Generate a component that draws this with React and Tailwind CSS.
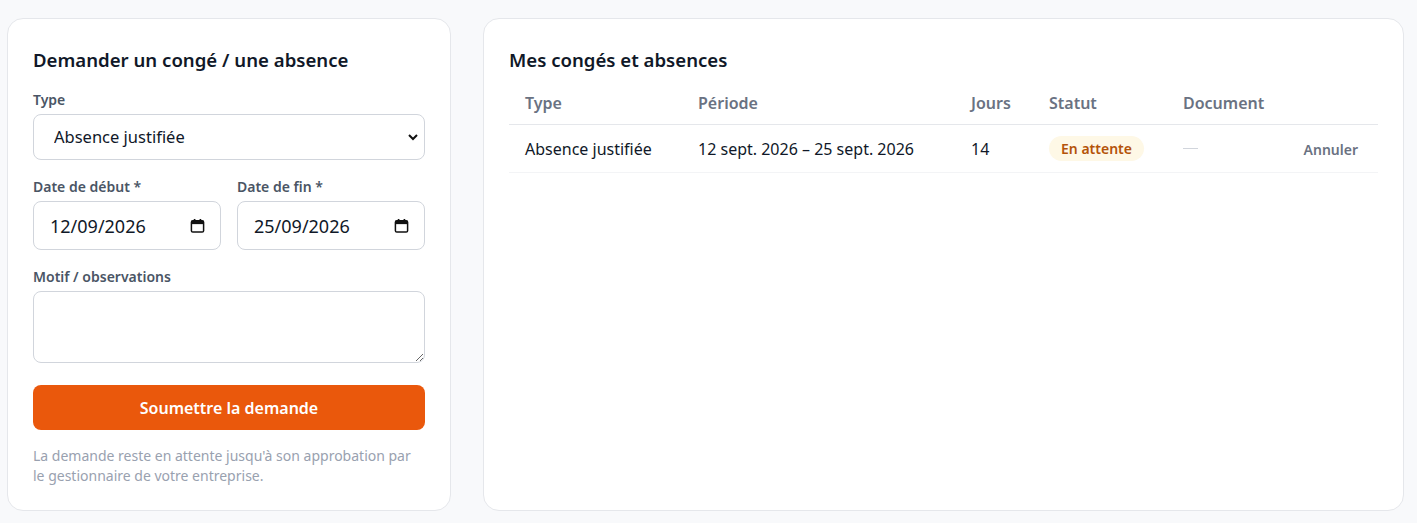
import { useState } from "react";

const font = { fontFamily: '"Noto Sans", "Open Sans", sans-serif' };

function CalendarIcon() {
  return (
    <svg width="15" height="15" viewBox="0 0 16 16" className="pointer-events-none absolute right-4 top-1/2 -translate-y-1/2">
      <rect x="1.5" y="2.5" width="13" height="12" rx="1.5" fill="none" stroke="#111" strokeWidth="1.6" />
      <rect x="1.5" y="2.5" width="13" height="3.5" fill="#111" />
      <rect x="4" y="0.5" width="1.8" height="3" fill="#111" />
      <rect x="10.2" y="0.5" width="1.8" height="3" fill="#111" />
    </svg>
  );
}

function DateField({ label, value }) {
  return (
    <div className="flex flex-col gap-1">
      <label className="text-sm font-semibold text-gray-600">{label}</label>
      <div className="relative">
        <input
          type="text"
          defaultValue={value}
          className="h-[49px] w-full rounded-lg border border-gray-300 bg-white pl-4 pr-10 text-[18px] text-gray-900 outline-none"
        />
        <CalendarIcon />
      </div>
    </div>
  );
}

export default function App() {
  const [type, setType] = useState("justifiee");

  return (
    <div className="min-h-screen bg-[#f8f9fb] pl-[7px] pr-[13px] pt-[18px]" style={font}>
      <div className="flex gap-8 items-stretch">
        {/* formulaire de demande */}
        <section className="w-[444px] shrink-0 rounded-2xl border border-gray-200 bg-white px-[25px] pt-[29px] pb-[24px]">
          <h2 className="text-[18.6px] font-semibold text-gray-900 leading-6">Demander un congé / une absence</h2>

          <div className="mt-[18px] flex flex-col gap-1">
            <label className="text-sm font-semibold text-gray-600">Type</label>
            <div className="relative">
              <select
                value={type}
                onChange={(e) => setType(e.target.value)}
                className="h-[46px] w-full appearance-none rounded-lg border border-gray-300 bg-white pl-5 pr-10 text-[16.5px] text-gray-900 outline-none"
              >
                <option value="conge">Congé payé</option>
                <option value="justifiee">Absence justifiée</option>
                <option value="maladie">Arrêt maladie</option>
              </select>
              <svg width="12" height="12" viewBox="0 0 12 12" className="pointer-events-none absolute right-[6px] top-1/2 -translate-y-1/2">
                <path d="M2 4l4 4 4-4" fill="none" stroke="#111" strokeWidth="2" />
              </svg>
            </div>
          </div>

          <div className="mt-[17px] grid grid-cols-2 gap-4">
            <DateField label="Date de début *" value="12/09/2026" />
            <DateField label="Date de fin *" value="25/09/2026" />
          </div>

          <div className="mt-[17px] flex flex-col gap-1">
            <label className="text-sm font-semibold text-gray-600">Motif / observations</label>
            <textarea className="h-[72px] w-full rounded-lg border border-gray-300 bg-white px-4 py-2 text-base outline-none" />
          </div>

          <button className="mt-[22px] h-[45px] w-full rounded-lg bg-[#ea580c] text-base font-semibold text-white">
            Soumettre la demande
          </button>

          <p className="mt-4 text-sm leading-5 text-gray-400">
            La demande reste en attente jusqu'à son approbation par le gestionnaire de votre entreprise.
          </p>
        </section>

        {/* historique */}
        <section className="flex-1 rounded-2xl border border-gray-200 bg-white px-[25px] pt-[29px]">
          <h2 className="text-[18.6px] font-semibold text-gray-900 leading-6">Mes congés et absences</h2>
          <table className="mt-[13px] w-full table-fixed border-collapse text-left">
            <colgroup>
              <col className="w-[173px]" />
              <col className="w-[273px]" />
              <col className="w-[78px]" />
              <col className="w-[134px]" />
              <col />
              <col className="w-[110px]" />
            </colgroup>
            <thead>
              <tr className="border-b border-gray-200">
                <th className="px-4 pt-[6px] pb-[9px] text-base font-semibold text-gray-500">Type</th>
                <th className="px-4 pt-[6px] pb-[9px] text-base font-semibold text-gray-500">Période</th>
                <th className="px-4 pt-[6px] pb-[9px] text-base font-semibold text-gray-500">Jours</th>
                <th className="px-4 pt-[6px] pb-[9px] text-base font-semibold text-gray-500">Statut</th>
                <th className="px-4 pt-[6px] pb-[9px] text-base font-semibold text-gray-500">Document</th>
                <th className="px-4 pt-[6px] pb-[9px]"></th>
              </tr>
            </thead>
            <tbody>
              <tr className="border-b border-gray-100">
                <td className="h-[48px] px-4 text-base text-gray-900">Absence justifiée</td>
                <td className="px-4 text-base text-gray-900">12 sept. 2026 – 25 sept. 2026</td>
                <td className="px-4 text-base text-gray-900">14</td>
                <td className="px-4">
                  <span className="inline-flex h-[25px] items-center rounded-full bg-[#fef8e6] px-3 text-sm font-semibold text-[#b45309]">
                    En attente
                  </span>
                </td>
                <td className="px-4">
                  <span className="block h-px w-[15px] bg-gray-300" />
                </td>
                <td className="px-5 text-right">
                  <button className="text-sm font-semibold text-gray-500">Annuler</button>
                </td>
              </tr>
            </tbody>
          </table>
        </section>
      </div>
    </div>
  );
}
